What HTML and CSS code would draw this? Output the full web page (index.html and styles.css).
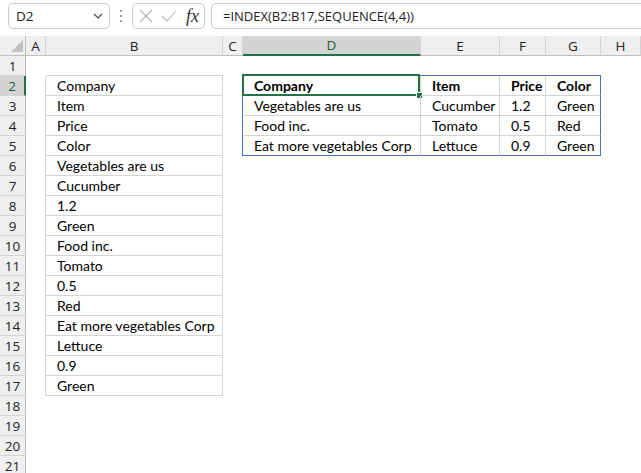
FILE: index.html
```html
<!DOCTYPE html>
<html>
<head>
<meta charset="utf-8">
<link rel="stylesheet" href="styles.css">
</head>
<body>
<div class="topbar">
  <div class="namebox"><span class="nb-text">D2</span><svg class="chev" width="10" height="6" viewBox="0 0 10 6"><polyline points="1,1 5,5 9,1" fill="none" stroke="#444" stroke-width="1.2"/></svg></div>
  <div class="dots"><svg width="4" height="14" viewBox="0 0 4 14"><circle cx="2" cy="2" r="1.1" fill="#8a8a8a"/><circle cx="2" cy="7" r="1.1" fill="#8a8a8a"/><circle cx="2" cy="12" r="1.1" fill="#8a8a8a"/></svg></div>
  <div class="fxbox">
    <svg width="14" height="14" viewBox="0 0 14 14"><path d="M1 1 L13 13 M13 1 L1 13" stroke="#b4b4b4" stroke-width="1.1" fill="none"/></svg>
    <svg width="16" height="12" viewBox="0 0 16 12"><polyline points="1,6 6,11 15,1" stroke="#b4b4b4" stroke-width="1.1" fill="none"/></svg>
    <span class="fx">fx</span>
  </div>
  <div class="formula">=INDEX(B2:B17,SEQUENCE(4,4))</div>
</div>
<div class="sheet">
  <div class="corner"><svg width="14" height="14" viewBox="0 0 14 14"><polygon points="13,1 13,13 1,13" fill="#c2c2c2"/></svg></div>
  <div class="ch">A</div><div class="ch">B</div><div class="ch">C</div><div class="ch sel">D</div><div class="ch">E</div><div class="ch">F</div><div class="ch">G</div><div class="ch">H</div>

  <div class="rh">1</div><div class="c"></div><div class="c bb-g"></div><div class="c"></div><div class="c bb-b"></div><div class="c bb-b"></div><div class="c bb-b"></div><div class="c bb-b"></div><div class="c"></div>

  <div class="rh sel">2</div><div class="c br-g"></div><div class="c br-g bb-g">Company</div><div class="c br-b"></div><div class="c br-g bb-g bold active">Company<span class="selbox"></span><span class="handle"></span></div><div class="c br-g bb-g bold">Item</div><div class="c br-g bb-g bold">Price</div><div class="c br-b bb-g bold">Color</div><div class="c"></div>

  <div class="rh">3</div><div class="c br-g"></div><div class="c br-g bb-g">Item</div><div class="c br-b"></div><div class="c br-g bb-g">Vegetables are us</div><div class="c br-g bb-g">Cucumber</div><div class="c br-g bb-g">1.2</div><div class="c br-b bb-g">Green</div><div class="c"></div>

  <div class="rh">4</div><div class="c br-g"></div><div class="c br-g bb-g">Price</div><div class="c br-b"></div><div class="c br-g bb-g">Food inc.</div><div class="c br-g bb-g">Tomato</div><div class="c br-g bb-g">0.5</div><div class="c br-b bb-g">Red</div><div class="c"></div>

  <div class="rh">5</div><div class="c br-g"></div><div class="c br-g bb-g">Color</div><div class="c br-b"></div><div class="c br-g bb-b">Eat more vegetables Corp</div><div class="c br-g bb-b">Lettuce</div><div class="c br-g bb-b">0.9</div><div class="c br-b bb-b">Green</div><div class="c"></div>

  <div class="rh">6</div><div class="c br-g"></div><div class="c br-g bb-g">Vegetables are us</div><div class="c rest"></div>
  <div class="rh">7</div><div class="c br-g"></div><div class="c br-g bb-g">Cucumber</div><div class="c rest"></div>
  <div class="rh">8</div><div class="c br-g"></div><div class="c br-g bb-g">1.2</div><div class="c rest"></div>
  <div class="rh">9</div><div class="c br-g"></div><div class="c br-g bb-g">Green</div><div class="c rest"></div>
  <div class="rh">10</div><div class="c br-g"></div><div class="c br-g bb-g">Food inc.</div><div class="c rest"></div>
  <div class="rh">11</div><div class="c br-g"></div><div class="c br-g bb-g">Tomato</div><div class="c rest"></div>
  <div class="rh">12</div><div class="c br-g"></div><div class="c br-g bb-g">0.5</div><div class="c rest"></div>
  <div class="rh">13</div><div class="c br-g"></div><div class="c br-g bb-g">Red</div><div class="c rest"></div>
  <div class="rh">14</div><div class="c br-g"></div><div class="c br-g bb-g">Eat more vegetables Corp</div><div class="c rest"></div>
  <div class="rh">15</div><div class="c br-g"></div><div class="c br-g bb-g">Lettuce</div><div class="c rest"></div>
  <div class="rh">16</div><div class="c br-g"></div><div class="c br-g bb-g">0.9</div><div class="c rest"></div>
  <div class="rh">17</div><div class="c br-g"></div><div class="c br-g bb-g">Green</div><div class="c rest"></div>
  <div class="rh">18</div><div class="c fill"></div>
  <div class="rh">19</div><div class="c fill"></div>
  <div class="rh">20</div><div class="c fill"></div>
  <div class="rh">21</div><div class="c fill"></div>
</div>
</body>
</html>
```

FILE: styles.css
```css
html, body {
  margin: 0;
  padding: 0;
}
body {
  width: 641px;
  height: 473px;
  overflow: hidden;
  background: #ffffff;
  font-family: "Lato", "Liberation Sans", sans-serif;
  color: #000;
}
.topbar {
  height: 36px;
  box-sizing: border-box;
  padding: 3px 0 0 8px;
  display: flex;
  align-items: flex-start;
  background: #ffffff;
}
.namebox {
  width: 102px;
  height: 26px;
  box-sizing: border-box;
  border: 1px solid #c9c9c9;
  border-radius: 5px;
  display: flex;
  align-items: center;
  justify-content: space-between;
  padding: 0 6px 0 7px;
  font-family: "Open Sans", sans-serif;
  font-size: 13.5px;
  color: #222;
}
.dots {
  width: 22px;
  height: 26px;
  display: flex;
  align-items: center;
  justify-content: center;
}
.fxbox {
  width: 73px;
  height: 26px;
  box-sizing: border-box;
  border: 1px solid #c9c9c9;
  border-radius: 5px;
  display: flex;
  align-items: center;
  padding: 0 0 0 6px;
  gap: 8px;
}
.fx {
  font-family: "Liberation Serif", serif;
  font-style: italic;
  font-size: 18px;
  color: #333;
  margin-left: 1px;
}
.formula {
  flex: 1;
  margin-left: 6px;
  margin-right: -10px;
  height: 26px;
  box-sizing: border-box;
  border: 1px solid #c9c9c9;
  border-radius: 5px;
  padding-left: 11px;
  display: flex;
  align-items: center;
  font-family: "Open Sans", sans-serif;
  font-size: 13px;
  color: #222;
}
.sheet {
  display: grid;
  grid-template-columns: 26px 20px 177px 20px 178px 79px 46px 55px 1fr;
  grid-auto-rows: 20px;
}
.corner {
  background: #efefef;
  border-right: 1px solid #bfbfbf;
  border-bottom: 1px solid #bfbfbf;
  box-sizing: border-box;
  display: flex;
  align-items: flex-end;
  justify-content: flex-end;
  padding: 0 1px 2px 0;
}
.ch {
  background: #efefef;
  border-right: 1px solid #d4d4d4;
  border-bottom: 1px solid #bfbfbf;
  box-sizing: border-box;
  display: flex;
  align-items: center;
  justify-content: center;
  font-family: "Open Sans", sans-serif;
  font-size: 13.5px;
  color: #222;
}
.ch.sel {
  background: #d4d4d4;
  border-bottom: 2px solid #217346;
  color: #1b5e38;
}
.rh {
  background: #efefef;
  border-right: 1px solid #bfbfbf;
  border-bottom: 1px solid #d4d4d4;
  box-sizing: border-box;
  display: flex;
  align-items: center;
  justify-content: center;
  font-family: "Open Sans", sans-serif;
  font-size: 13.5px;
  color: #222;
}
.rh.sel {
  background: #d4d4d4;
  border-right: 2px solid #217346;
  color: #1b5e38;
}
.c {
  position: relative;
  box-sizing: border-box;
  display: flex;
  align-items: flex-end;
  padding: 0 0 0 11px;
  font-size: 14px;
  line-height: 18px;
  white-space: nowrap;
}
.bold { font-weight: bold; }
.br-g { border-right: 1px solid #d4d4d4; }
.bb-g { border-bottom: 1px solid #d4d4d4; }
.br-b { border-right: 1px solid #4472c4; }
.bb-b { border-bottom: 1px solid #4472c4; }
.rest { grid-column: 4 / -1; }
.fill { grid-column: 2 / -1; }
.selbox {
  position: absolute;
  left: -1px;
  top: -2px;
  right: 0;
  bottom: -1px;
  border: 2px solid #217346;
  box-sizing: border-box;
}
.handle {
  position: absolute;
  left: 173px;
  top: 16px;
  width: 5px;
  height: 5px;
  background: #217346;
  border: 1px solid #fff;
}
```
